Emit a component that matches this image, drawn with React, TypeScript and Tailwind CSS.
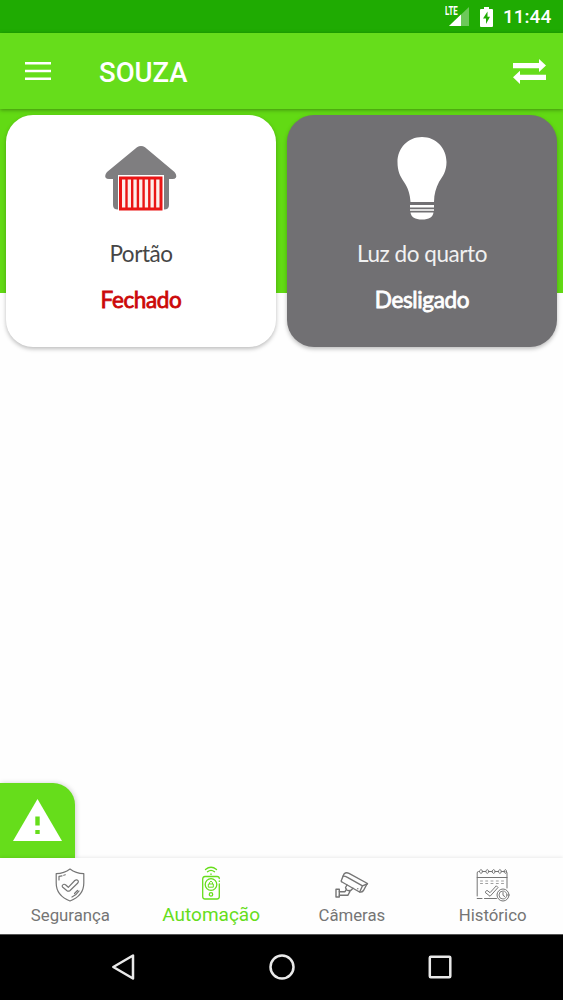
import React from "react";

function StatusBar() {
  return (
    <div className="h-[33px] shrink-0 bg-[#1fab02] flex items-center justify-end pr-[11px] text-white">
      <div className="flex items-start">
        <span className="-mt-[1px] text-[12px] leading-[11px] font-bold font-['Roboto',sans-serif] w-[13px] -mr-[9px] origin-left scale-x-[0.66]">
          LTE
        </span>
        <svg width="20" height="19" viewBox="0 0 20 19">
          <path d="M20 0V19H0Z" fill="#fff" fillOpacity="0.35" />
          <path d="M12 7.6V19H0Z" fill="#fff" />
        </svg>
      </div>
      <svg className="ml-[11px]" width="13" height="20" viewBox="0 0 13 20">
        <path d="M4 0H9V2H12Q13 2 13 3V19Q13 20 12 20H1Q0 20 0 19V3Q0 2 1 2H4Z" fill="#fff" />
        <path d="M7.5 4.5L3 11.5H6V17L10 9.8H7.5Z" fill="#1fab02" />
      </svg>
      <span className="ml-[10px] w-[49px] whitespace-nowrap text-[19px] leading-[33px] font-medium">11:44</span>
    </div>
  );
}

function Header() {
  return (
    <div className="relative h-[76px] shrink-0 bg-[#66dd1b] flex items-center pl-[25px] pr-[17px] shadow-[0_1px_4px_rgba(0,0,0,0.35)]">
      <svg width="26" height="18" viewBox="0 0 26 18" fill="#fff">
        <path d="M0 0H26V2.6H0ZM0 7.7H26V10.3H0ZM0 15.4H26V18H0Z" />
      </svg>
      <h1 className="ml-[48px] pt-[4px] text-[27.5px] leading-8 font-medium text-white">SOUZA</h1>
      <svg className="ml-auto" width="33" height="25" viewBox="0 0 33 25" fill="#fff">
        <path d="M0 4H26V0L33 6.500L26 13V9.200H0Z" />
        <path d="M33 15.800H7V11.700L0 18.300L7 25V21H33Z" />
      </svg>
    </div>
  );
}

function GarageIcon() {
  return (
    <svg width="72" height="65" viewBox="0 0 72 65">
      <path
        d="M32 1.3Q36 -1.3 40 1.3L69.500 26Q72 29 71 31.5Q70 33 67.500 33H64V59Q64 63.5 59 63.5H13Q8 63.5 8 59V33H4Q1.500 33 0.500 31.500Q-0.500 29 2 26Z"
        fill="#7f7e80"
      />
      <path d="M13 29H59V65H13Z" fill="#fff" />
      <path d="M14 30.500H57.500V64.500H14Z" fill="#ea1515" />
      <path
        d="M17 33.500H20.300V61.500H17ZM22.700 33.500H26V61.500H22.700ZM28.400 33.500H31.700V61.500H28.400ZM34.100 33.500H37.400V61.500H34.100ZM39.800 33.500H43.100V61.500H39.800ZM45.500 33.500H48.800V61.500H45.500ZM51.200 33.500H54.500V61.500H51.200Z"
        fill="#fdeeec"
      />
    </svg>
  );
}

function BulbIcon() {
  return (
    <svg width="50" height="83" viewBox="0 0 50 83">
      <path
        d="M25 0C11 0 0.500 11 0.500 25C0.500 34 3 39 7 45C11 51 13 57 13.500 65H37C37 57 39 51 42 45C46 39 49.500 34 49.500 25C49.500 11 39 0 25 0Z"
        fill="#fff"
      />
      <path d="M13 68H37V70.500H13Z" fill="#fff" />
      <path d="M13 72H37V74H13Z" fill="#dedede" />
      <path d="M13.500 75.500H36.500C36 80 32 82.500 25 82.500S14 80 13.500 75.500Z" fill="#fff" />
    </svg>
  );
}

function ShieldIcon() {
  return (
    <svg width="30" height="34" viewBox="0 0 30 34" fill="none" stroke="currentColor" strokeWidth="1.2" strokeLinecap="round" strokeLinejoin="round">
      <path d="M15 1C11 4 6 5.500 1.200 5.700V15C1.200 24 6 29.500 15 33C24 29.500 28.800 24 28.800 15V5.700C24 5.500 19 4 15 1Z" />
      <path d="M4 12V8.300L7 7.800M8.800 7.300L10.300 6.800M17 29C20 27.500 22.500 25.500 24 23M19.500 25.500L22.500 22.500" />
      <path d="M7.300 17.500Q8.800 15.300 10.800 17L13.300 19.300L19.800 12.500Q22 11 23.300 13Q23.500 14 22.800 15L14.800 22.700Q13.300 23.700 12 22.700L7.500 19Q7 18.200 7.300 17.500Z" />
    </svg>
  );
}

function RemoteIcon() {
  return (
    <svg width="20" height="34" viewBox="0 0 20 34" fill="none" stroke="currentColor" strokeWidth="1.3" strokeLinecap="round">
      <path d="M4.500 3.500Q10 -1 15.500 3.500M6.500 5.700Q10 3 13.500 5.700M10 8V8.400" />
      <path d="M18.300 12.500Q18.300 10.500 16 10.500H4Q1.700 10.500 1.700 13V30.500Q1.700 33 4 33H16Q18.300 33 18.300 30.500V18M18.300 15V15.400" />
      <circle cx="10" cy="18.500" r="5.800" />
      <path d="M7.700 18H12.300V21.200H7.700ZM8.500 17.700V16.500Q10 13.800 11.500 16.500V17.700" strokeWidth="1" />
      <circle cx="10" cy="28.400" r="1.700" />
    </svg>
  );
}

function CameraIcon() {
  return (
    <svg width="34" height="26" viewBox="0 0 34 26" fill="none" stroke="currentColor" strokeWidth="1.400" strokeLinecap="round" strokeLinejoin="round">
      <path d="M9 2Q11 0 14 1.300L32.500 11.500L31.700 12.500L28.500 18.500Q27 20.500 24.500 20L7 10Q5.800 9.400 6.500 8Z" />
      <path d="M8 4.200Q10 4 12 5.200L27.500 13.800L24.800 19.800M27.500 13.800L32 12M22.800 16.600V16.700" />
      <path d="M12 13L10.500 15.500Q11 18.500 14 18.700L16 18.300L18 16.300M11.500 17.200L10 19.700H4.300M15.500 18.500L12.800 23.300H4.300" />
      <path d="M1 17.300H4.300V25H1Z" />
    </svg>
  );
}

function CalendarIcon() {
  return (
    <svg width="34" height="34" viewBox="0 0 34 34" fill="none" stroke="currentColor" strokeWidth="1" strokeLinecap="round" strokeLinejoin="round">
      <path d="M3.300 3.500H2.500Q1.200 3.500 1.200 5V28M1.200 30.500H6M8.500 30.500H20.500M6.500 3.500H9.700M13 3.500H16M19.300 3.500H22.300M25.500 3.500H28.500M30 3.500Q31 3.500 31 5V20M1.200 9.500H31" />
      <path d="M3.700 2.500Q5 .5 6.300 2.500V4.500Q5 6.500 3.700 4.500ZM10 2.500Q11.300 .5 12.600 2.500V4.500Q11.300 6.500 10 4.500ZM16.300 2.500Q17.600 .5 18.900 2.500V4.500Q17.600 6.500 16.300 4.500ZM22.600 2.500Q23.900 .5 25.200 2.500V4.500Q23.900 6.500 22.600 4.500ZM28.200 2.500Q29.300 .5 30.400 2.500V4.500Q29.300 6.500 28.200 4.500Z" />
      <path d="M4.500 13H6.500M9.700 13H11.700M15 13H17M20.300 13H22.300M25.500 13H27.500M4.500 15.500H6.500M9.700 15.500H11.700M15 15.500H17M20.300 15.500H22.300M25.500 15.500H27.500" strokeWidth="0.700" />
      <path d="M9.300 24L11 22.300L14 24.700L20.300 17.800L22 19.500L14.300 28Z" />
      <circle cx="27" cy="27" r="6" />
      <circle cx="27" cy="27" r="4" strokeWidth="0.900" />
      <path d="M27 24.500V27.300L28.700 28.500" />
    </svg>
  );
}

function Dashboard() {
  const devices = [
    {
      id: "1",
      icon: <GarageIcon />,
      name: "Portão",
      status: "Fechado",
      card: "bg-white pt-[31px]",
      iconBox: "h-[94px]",
      nameColor: "text-[#464646]",
      statusColor: "text-[#cc0808]",
    },
    {
      id: "2",
      icon: <BulbIcon />,
      name: "Luz do quarto",
      status: "Desligado",
      card: "bg-[#717073] pt-[22px]",
      iconBox: "h-[103px]",
      nameColor: "text-[#f1f1f1]",
      statusColor: "text-white",
    },
  ];

  return (
    <div className="flex gap-[11px] pt-[6px] px-[6px]">
      {devices.map((item) => (
        <div
          key={item.id}
          className={`flex-1 h-[232px] rounded-[27px] flex flex-col items-center font-['Lato',sans-serif] shadow-[0_2px_4px_rgba(0,0,0,0.26)] ${item.card}`}
        >
          <div className={item.iconBox}>{item.icon}</div>
          <span className={`text-[22.5px] leading-7 tracking-[-0.45px] ${item.nameColor}`}>{item.name}</span>
          <span
            className={`mt-[18px] text-[22.5px] leading-7 tracking-[-0.35px] [-webkit-text-stroke:0.8px_currentColor] ${item.statusColor}`}
          >
            {item.status}
          </span>
        </div>
      ))}
    </div>
  );
}

function TabBar() {
  const tabs = [
    { id: "1", name: "Segurança", icon: <ShieldIcon />, active: false },
    { id: "2", name: "Automação", icon: <RemoteIcon />, active: true },
    { id: "3", name: "Câmeras", icon: <CameraIcon />, active: false },
    { id: "4", name: "Histórico", icon: <CalendarIcon />, active: false },
  ];

  return (
    <div className="relative h-[76px] shrink-0 bg-[#fefefe] grid grid-cols-4 shadow-[0_-1px_3px_rgba(0,0,0,0.08)]">
      {tabs.map((tab) => (
        <div
          key={tab.id}
          className={`flex flex-col items-center ${tab.active ? "pt-[8px] text-[#66dd1b]" : "pt-[10px] text-[#757575]"}`}
        >
          <div className="h-[34px] flex items-center">{tab.icon}</div>
          <span className={tab.active ? "mt-[4px] text-[19px] leading-[22px]" : "mt-[2px] text-[16.8px] leading-[22px]"}>
            {tab.name}
          </span>
        </div>
      ))}
    </div>
  );
}

function NavigationBar() {
  return (
    <div className="h-[66px] shrink-0 bg-black border-t border-[#555] flex items-center justify-between pl-[111px] pr-[111px] pb-[2px]">
      <svg width="24" height="28" viewBox="0 0 24 28" fill="none" stroke="#e9e9e9" strokeWidth="2.500" strokeLinejoin="round">
        <path d="M22 2.500V25.500L2.300 14Z" />
      </svg>
      <svg width="28" height="28" viewBox="0 0 28 28" fill="none" stroke="#e9e9e9" strokeWidth="2.500">
        <circle cx="14" cy="14" r="11.500" />
      </svg>
      <svg width="24" height="24" viewBox="0 0 24 24" fill="none" stroke="#e9e9e9" strokeWidth="2.500">
        <rect x="1.800" y="1.800" width="20.500" height="20.500" rx="1" />
      </svg>
    </div>
  );
}

export default function App() {
  return (
    <div className="w-full h-screen flex flex-col overflow-hidden bg-white font-['Roboto',sans-serif]">
      <StatusBar />
      <Header />
      <div className="flex-1 min-h-0 flex flex-col justify-between bg-[linear-gradient(#62da14_184px,#fefefe_184px)]">
        <Dashboard />
        <div className="w-[75px] h-[75px] rounded-tr-[22px] bg-[#66dd1b] pt-[16px] pl-[13px] shadow-[1px_0_5px_rgba(0,0,0,0.18)]">
          <svg width="49" height="42" viewBox="0 0 49 42">
            <path d="M24.500 0L49 42H0Z" fill="#fff" />
            <path d="M22.300 17.500H26.700V26.500H22.300ZM22.300 31H26.700V35H22.300Z" fill="#66dd1b" />
          </svg>
        </div>
      </div>
      <TabBar />
      <NavigationBar />
    </div>
  );
}
